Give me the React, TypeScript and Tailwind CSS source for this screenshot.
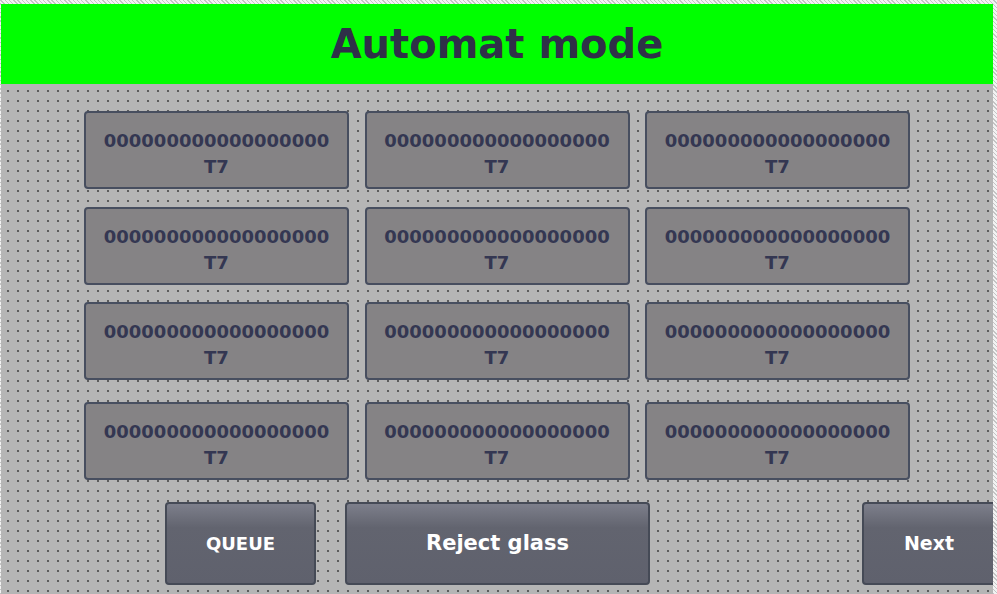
const font = { fontFamily: '"DejaVu Sans", Tahoma, sans-serif' };

function Tile() {
  return (
    <div className="w-[265px] h-[78px] shrink-0 rounded-[4px] border-2 border-[#474e5f] bg-[#858385] flex flex-col items-center pt-[15px] text-[18px] font-bold leading-[26px] text-[#343752]">
      <span>000000000000000000</span>
      <span>T7</span>
    </div>
  );
}

function Btn({ label, className }: { label: string; className: string }) {
  return (
    <div
      className={`h-[83px] shrink-0 rounded-[4px] border-2 border-[#454a56] bg-gradient-to-b from-[#7d7f8b] via-[#62646f] via-30% to-[#5f616d] flex items-center justify-center font-bold text-white ${className}`}
    >
      {label}
    </div>
  );
}

export default function App() {
  const rows = [0, 1, 2, 3];
  return (
    <div
      style={font}
      className="w-[997px] h-[594px] overflow-hidden pt-[4px] pr-[4px] pl-[1px] bg-[repeating-linear-gradient(45deg,#c4c4c4_0px,#c4c4c4_1px,#f2f2f2_1px,#f2f2f2_3px)] flex flex-col"
    >
      <div className="h-[80px] bg-[#00ff00] flex items-center justify-center text-[40px] font-bold text-[#2f3048]">
        Automat mode
      </div>
      <div className="flex-1 overflow-hidden bg-[#b5b5b5] bg-[radial-gradient(circle,#3c3c3c_0.6px,transparent_1px)] bg-[length:10px_10px] bg-[position:2px_2px] pt-[27px]">
        <div className="flex flex-col ml-[83px]">
          {rows.map((r) => (
            <div
              key={r}
              className={`flex gap-[15.5px] ${r === 1 ? "mt-[18px]" : r === 2 ? "mt-[17px]" : r === 3 ? "mt-[22px]" : ""}`}
            >
              <Tile />
              <Tile />
              <Tile />
            </div>
          ))}
        </div>
        <div className="flex mt-[22px] ml-[164px]">
          <Btn label="QUEUE" className="w-[151px] text-[18px]" />
          <Btn label="Reject glass" className="w-[305px] ml-[29px] text-[21px]" />
          <Btn label="Next" className="w-[134px] ml-[212px] text-[19px]" />
        </div>
      </div>
    </div>
  );
}
